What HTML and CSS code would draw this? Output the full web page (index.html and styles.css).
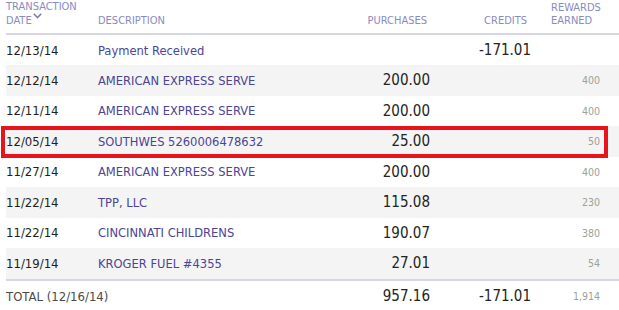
FILE: index.html
```html
<!DOCTYPE html>
<html>
<head>
<meta charset="utf-8">
<link rel="stylesheet" href="styles.css">
</head>
<body>
<div class="table">
  <div class="row head">
    <div class="c-date">TRANSACTION<br>DATE<svg class="caret" width="9" height="6" viewBox="0 0 9 6"><polyline points="0.8,0.8 4.5,4.6 8.2,0.8" fill="none" stroke="#7d7db8" stroke-width="1.6"/></svg></div>
    <div class="c-desc">DESCRIPTION</div>
    <div class="c-pur">PURCHASES</div>
    <div class="c-cred">CREDITS</div>
    <div class="c-rew">REWARDS<br>EARNED</div>
  </div>
  <div class="row first">
    <div class="c-date">12/13/14</div><div class="c-desc">Payment Received</div><div class="c-pur"></div><div class="c-cred">-171.01</div><div class="c-rew"></div>
  </div>
  <div class="row alt">
    <div class="c-date">12/12/14</div><div class="c-desc">AMERICAN EXPRESS SERVE</div><div class="c-pur">200.00</div><div class="c-cred"></div><div class="c-rew">400</div>
  </div>
  <div class="row">
    <div class="c-date">12/11/14</div><div class="c-desc">AMERICAN EXPRESS SERVE</div><div class="c-pur">200.00</div><div class="c-cred"></div><div class="c-rew">400</div>
  </div>
  <div class="row alt marked">
    <div class="c-date">12/05/14</div><div class="c-desc">SOUTHWES 5260006478632</div><div class="c-pur">25.00</div><div class="c-cred"></div><div class="c-rew">50</div>
    <div class="highlight"></div>
  </div>
  <div class="row">
    <div class="c-date">11/27/14</div><div class="c-desc">AMERICAN EXPRESS SERVE</div><div class="c-pur">200.00</div><div class="c-cred"></div><div class="c-rew">400</div>
  </div>
  <div class="row alt">
    <div class="c-date">11/22/14</div><div class="c-desc">TPP, LLC</div><div class="c-pur">115.08</div><div class="c-cred"></div><div class="c-rew">230</div>
  </div>
  <div class="row">
    <div class="c-date">11/22/14</div><div class="c-desc">CINCINNATI CHILDRENS</div><div class="c-pur">190.07</div><div class="c-cred"></div><div class="c-rew">380</div>
  </div>
  <div class="row alt">
    <div class="c-date">11/19/14</div><div class="c-desc">KROGER FUEL #4355</div><div class="c-pur">27.01</div><div class="c-cred"></div><div class="c-rew">54</div>
  </div>
  <div class="row total">
    <div class="c-date">TOTAL (12/16/14)</div><div class="c-desc"></div><div class="c-pur">957.16</div><div class="c-cred">-171.01</div><div class="c-rew">1,914</div>
  </div>
</div>
</body>
</html>
```
FILE: styles.css
```css
html, body {
  margin: 0;
  padding: 0;
  background: #ffffff;
}
body {
  font-family: "DejaVu Sans Condensed", "DejaVu Sans", sans-serif;
  font-stretch: condensed;
  overflow: hidden;
}
.table {
  margin-left: 6px;
  width: 613px;
}
.row {
  position: relative;
  display: grid;
  grid-template-columns: 92px 232px 100px 101px 69px 19px;
  align-items: center;
  height: 30.5px;
}
.row > div {
  white-space: nowrap;
}
.row.first {
  height: 30px;
}
.row.alt {
  background: #f4f4f4;
}
.row.head {
  align-items: end;
  border-bottom: 2px solid #d6d6e4;
  line-height: 13px;
  padding-bottom: 6px;
  box-sizing: border-box;
  height: 35px;
}
.row.head > div {
  font-size: 11px;
  color: #8a8abf;
}
.caret {
  display: inline-block;
  vertical-align: 5px;
  margin-left: 1px;
}
.row.head .c-pur {
  padding-right: 3px;
}
.row.head .c-cred {
  padding-right: 4px;
}
.row.head .c-rew {
  text-align: left;
  padding-left: 20px;
}
.c-date {
  font-size: 13px;
  color: #1e1e1e;
}
.c-desc {
  font-size: 12.8px;
  color: #4b4596;
}
.c-pur, .c-cred {
  text-align: right;
  font-size: 15px;
  color: #232323;
}
.c-rew {
  text-align: right;
  font-size: 10.5px;
  color: #9aa29a;
}
.row.total {
  border-top: 2px solid #d6d6e4;
  height: 31px;
}
.row.total .c-date {
  color: #4a4a4a;
}
.highlight {
  position: absolute;
  left: -5px;
  right: 11px;
  top: 0;
  bottom: -1px;
  border: 4px solid #e8141c;
  pointer-events: none;
}
```
